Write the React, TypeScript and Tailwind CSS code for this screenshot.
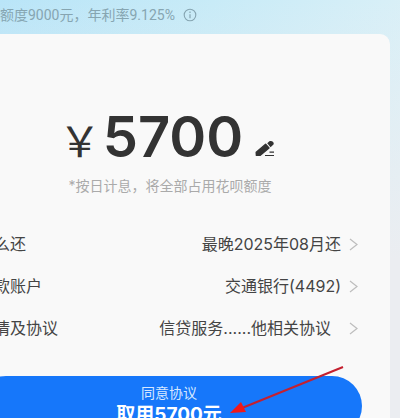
import React from "react";

type Detail = { label: string; value: string; inset?: boolean };

const details: Detail[] = [
  { label: "么还", value: "最晚2025年08月还" },
  { label: "款账户", value: "交通银行(4492)" },
  { label: "情及协议", value: "信贷服务......他相关协议", inset: true },
];

function InfoIcon() {
  return (
    <svg viewBox="0 0 14 14" className="h-[14px] w-[14px]" fill="none" stroke="currentColor" aria-hidden="true">
      <circle cx="7" cy="7" r="5.8" strokeWidth="1.1" />
      <path d="M7 6.2v4M7 3.6v1.3" strokeWidth="1.2" />
    </svg>
  );
}

function PencilIcon() {
  return (
    <svg viewBox="0 0 20 17" className="h-[17px] w-[20px]" fill="none" stroke="#333" aria-hidden="true">
      <path d="M1.4 15.4 1.2 12.4 10.6 4.3 14 8 5 15.4Z" fill="#333" strokeWidth="1.4" strokeLinejoin="round" />
      <path d="M12.2 3.2 14.4 1.3C16.2 0.2 19.4 1.6 18.7 4.2L15.6 7.2Z" fill="#333" stroke="none" />
      <path d="M14.5 12.2h4.5M10 15.5h9" strokeWidth="1.2" />
    </svg>
  );
}

function Chevron() {
  return (
    <svg viewBox="0 0 9 13" className="h-[13px] w-[9px] shrink-0" fill="none" stroke="#bdbdbd" strokeWidth="1.2" aria-hidden="true">
      <path d="M1 1l7 5.5L1 12" />
    </svg>
  );
}

export default function App() {
  return (
    <main className="relative h-screen overflow-hidden bg-[linear-gradient(180deg,transparent_0,#ebedf1_260px),linear-gradient(100deg,#b9e5f8_0%,#c8ebf7_45%,#dff1f7_100%)] font-['Inter','Noto_Sans_CJK_SC',sans-serif] text-[#444]">
      <header className="flex h-[34px] items-center gap-2 pb-1 font-['Roboto','Noto_Sans_CJK_SC',sans-serif] text-sm text-[#86a5b1]">
        <span className="whitespace-nowrap">额度9000元，年利率9.125%</span>
        <button type="button" aria-label="利率说明">
          <InfoIcon />
        </button>
      </header>

      <section className="mr-2.5 rounded-tr-[10px] bg-[#f9f9f9] pt-[75px] pb-10">
        <div className="flex items-end justify-center pr-14 text-[#333]">
          <div className="flex items-baseline gap-0.5 leading-[56px]">
            <span className="font-['Noto_Sans_CJK_SC',sans-serif] text-[42px]">￥</span>
            <span className="text-[56px] font-semibold">5700</span>
          </div>
          <button type="button" aria-label="修改金额" className="mb-2.5 ml-3">
            <PencilIcon />
          </button>
        </div>
        <p className="mt-[9px] pr-[50px] text-center text-sm leading-5 text-[#aaa]">*按日计息，将全部占用花呗额度</p>

        <ul className="-ml-1.5 mt-[27px] pr-8">
          {details.map((d) => (
            <li key={d.label}>
              <button type="button" className="flex h-[42px] w-full items-center justify-between whitespace-nowrap text-base">
                <span>{d.label}</span>
                <span className="flex items-center gap-2">
                  <span className={d.inset ? "pr-2.5" : ""}>{d.value}</span>
                  <Chevron />
                </span>
              </button>
            </li>
          ))}
        </ul>

        <button
          type="button"
          className="-ml-6 mt-[27px] flex h-[60px] w-[calc(100%-4px)] flex-col items-center rounded-full bg-[#1677fa] pt-[7px] text-white"
        >
          <span className="text-sm leading-5 text-[#d5e7ff]">同意协议</span>
          <span className="text-[19px] font-bold leading-6">取用5700元</span>
        </button>
      </section>

      <svg viewBox="0 0 114 52" className="pointer-events-none absolute left-[230px] top-[366px] h-[52px] w-[114px]" aria-hidden="true">
        <path d="M113 1 12 42" stroke="#c4202f" strokeWidth="2" />
        <path d="M0 47 11 36 16 46Z" fill="#f01818" />
      </svg>
    </main>
  );
}
